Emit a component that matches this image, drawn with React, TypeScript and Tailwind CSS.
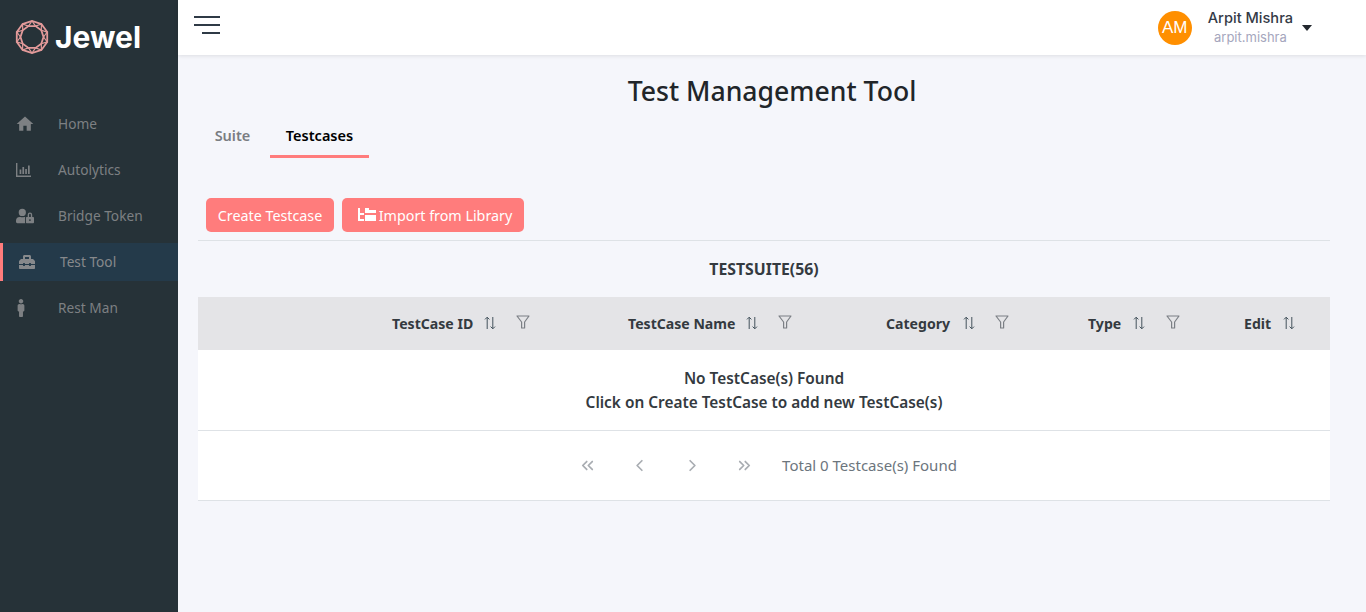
import { ChevronLeft, ChevronRight, ChevronsLeft, ChevronsRight } from 'lucide-react';
import { FaMale, FaToolbox, FaUserLock } from 'react-icons/fa';
import { MdHome } from 'react-icons/md';

function ChartIcon() {
  return (
    <svg viewBox="0 0 15 14" className="w-[15px] h-[14px]" fill="currentColor">
      <path d="M0 0h1.4v12.6H15V14H0z" />
      <rect x="3.6" y="6.5" width="1.7" height="4.5" />
      <rect x="6.4" y="4" width="1.7" height="7" />
      <rect x="9.2" y="6" width="1.7" height="5" />
      <rect x="12" y="2.5" width="1.7" height="8.5" />
    </svg>
  );
}

const NAV_ITEMS = [
  { label: 'Home', icon: <MdHome className="w-[20px] h-[20px] -ml-[1px]" /> },
  { label: 'Autolytics', icon: <ChartIcon /> },
  { label: 'Bridge Token', icon: <FaUserLock className="w-[18px] h-[18px]" /> },
  { label: 'Test Tool', icon: <FaToolbox className="w-4 h-4" />, active: true },
  { label: 'Rest Man', icon: <FaMale className="w-[18px] h-[18px] -ml-[4px]" /> },
];

const COLUMNS = [
  { label: 'TestCase ID', filter: true, sortGap: 'ml-[11px] -mt-[1px]', filterGap: 'ml-[20px] -mt-[3px]' },
  { label: 'TestCase Name', filter: true, sortGap: 'ml-[11px] -mt-[1px]', filterGap: 'ml-[20px] -mt-[3px]' },
  { label: 'Category', filter: true, sortGap: 'ml-[13px] -mt-[1px]', filterGap: 'ml-[20px] -mt-[3px]' },
  { label: 'Type', filter: true, sortGap: 'ml-[12px] -mt-[1px]', filterGap: 'ml-[21px] -mt-[3px]' },
  { label: 'Edit', filter: false, sortGap: 'ml-[12px] -mt-[1px]', filterGap: '' },
];

function JewelLogo() {
  const outer: string[] = [];
  const inner: string[] = [];
  for (let i = 0; i < 10; i++) {
    const a = (Math.PI * 2 * i) / 10 + Math.PI / 10;
    outer.push(`${17 + 16 * Math.cos(a)},${17 + 16 * Math.sin(a)}`);
    const b = a + Math.PI / 10;
    inner.push(`${17 + 11.5 * Math.cos(b)},${17 + 11.5 * Math.sin(b)}`);
  }
  return (
    <svg viewBox="0 0 34 34" className="w-[34px] h-[34px]" fill="none" stroke="#e39a9a">
      <polygon points={outer.join(' ')} strokeWidth={1.8} />
      <polygon points={inner.join(' ')} strokeWidth={1.8} />
      {/* lattice between the two rings */}
      {outer.map((p, i) => (
        <polyline key={i} points={`${inner[i]} ${p} ${inner[(i + 9) % 10]}`} strokeWidth={1.2} />
      ))}
    </svg>
  );
}

function SortIcon() {
  return (
    <svg viewBox="0 0 12 14" className="w-3 h-3.5" fill="none" stroke="#43525c" strokeWidth={1}>
      <path d="M3.2 13V1.4M1 3.4l2.2-2.2 2.2 2.2" />
      <path d="M8.8 1v11.6M6.6 10.6l2.2 2.2 2.2-2.2" />
    </svg>
  );
}

function FilterIcon() {
  return (
    <svg viewBox="0 0 14 14" className="w-3.5 h-3.5" fill="none" stroke="#7b7f85" strokeWidth={1.2}>
      <path d="M1 1h12L8.6 7v6H5.6V7z" strokeLinejoin="round" />
    </svg>
  );
}

export default function App() {
  return (
    <div className="flex h-[612px] overflow-hidden bg-[#f5f6fb] font-['Noto_Sans','Open_Sans',sans-serif]">
      {/* Sidebar */}
      <aside className="w-[178px] shrink-0 bg-[#263238]">
        <div className="flex items-center gap-[6px] pl-[15px] h-[74px]">
          <JewelLogo />
          <span className="font-['Inter',sans-serif] font-bold text-[30px] text-white leading-none">Jewel</span>
        </div>
        <nav className="mt-[31px] flex flex-col">
          {NAV_ITEMS.map((item) => (
            <div
              key={item.label}
              className={
                item.active
                  ? 'flex items-center h-[38px] mb-[8px] bg-[#243a4a] border-l-[3px] border-[#ff7c7c] text-[#87898c]'
                  : 'flex items-center h-[38px] mb-[8px] text-[#7d8083]'
              }
            >
              <span className={item.active ? 'w-[57px] pl-[16px] flex items-center' : 'w-[58px] pl-[16px] flex items-center'}>
                {item.icon}
              </span>
              <span className="text-[13.7px]">{item.label}</span>
            </div>
          ))}
        </nav>
      </aside>

      <div className="flex-1 min-w-0 flex flex-col">
        {/* Header */}
        <header className="h-[55px] shrink-0 bg-white shadow-[0_1px_4px_rgba(0,0,0,0.1)] flex items-center pl-[16px] pr-[54px]">
          <div className="flex flex-col items-end gap-[6px] w-[26px] -mt-[5px]">
            <span className="h-[2px] w-[26px] bg-[#2f3a46]" />
            <span className="h-[2px] w-[26px] bg-[#2f3a46]" />
            <span className="h-[2px] w-[18px] bg-[#2f3a46]" />
          </div>
          <div className="ml-auto flex items-center">
            <div className="w-[34px] h-[34px] rounded-full bg-[#ff8f00] flex items-center justify-center text-white text-[17px] font-['Liberation_Sans',sans-serif]">
              AM
            </div>
            <div className="ml-[16px] flex flex-col items-center font-['Inter',sans-serif]">
              <span className="text-[14.6px] font-medium leading-[19px] text-[#343a46]">Arpit Mishra</span>
              <span className="text-[13px] leading-[19px] text-[#a5a6bd]">arpit.mishra</span>
            </div>
            <span className="ml-[9px] w-0 h-0 border-x-[5.5px] border-x-transparent border-t-[6px] border-t-[#23282e]" />
          </div>
        </header>

        <main className="flex-1 px-[20px] pr-[36px]">
          <h1 className="text-center ml-[-20px] mr-[-36px] mt-[17px] text-[26.6px] font-medium leading-[38px] text-[#212529]">
            Test Management Tool
          </h1>

          {/* Tabs */}
          <div className="flex mt-[9px] h-[43px] text-[14.5px] font-semibold">
            <div className="w-[69px] text-center leading-[32px] text-[#7a7d82]">Suite</div>
            <div className="ml-[3px] w-[99px] text-center leading-[32px] text-black border-b-[3px] border-[#ff7c7c] h-[39px]">
              Testcases
            </div>
          </div>

          {/* Actions */}
          <div className="flex gap-[8px] mt-[36px] ml-[8px]">
            <button className="h-[34px] w-[128px] pt-[1px] rounded-[5px] bg-[#ff7c7c] text-white text-[14.3px]">Create Testcase</button>
            <button className="h-[34px] w-[182px] pl-[4px] pt-[1px] rounded-[5px] bg-[#ff7c7c] text-white text-[14.3px] flex items-center justify-center gap-[3px]">
              <svg viewBox="0 0 18 14" className="w-[18px] h-[14px] -mt-[2px]" fill="white">
                <path d="M0 0h2v5h4v2H2v4h4v2H0z" />
                <rect x="7" y="0" width="4" height="5" />
                <rect x="11" y="2" width="7" height="3" />
                <rect x="7" y="7" width="11" height="6" />
              </svg>
              Import from Library
            </button>
          </div>

          {/* Table */}
          <section className="mt-[8px] border-t border-[#dee2e6]">
            <div className="h-[56px] pt-[2px] flex items-center justify-center text-[15.8px] font-bold text-[#343a40]">TESTSUITE(56)</div>
            <div className="h-[53px] pt-[1px] bg-[#e4e4e7] grid grid-cols-[194px_236px_258px_202px_156px_1fr] items-center">
              <div />
              {COLUMNS.map((col) => (
                <div key={col.label} className="flex items-center text-[14.1px] font-bold text-[#343a40]">
                  <span>{col.label}</span>
                  <span className={col.sortGap}><SortIcon /></span>
                  {col.filter && (
                    <span className={col.filterGap}><FilterIcon /></span>
                  )}
                </div>
              ))}
            </div>
            <div className="h-[81px] pt-[2px] bg-white border-b border-[#dee2e6] flex flex-col items-center justify-center text-[15.4px] font-semibold leading-[24px] text-[#343a40]">
              <span>No TestCase(s) Found</span>
              <span>Click on Create TestCase to add new TestCase(s)</span>
            </div>
            <div className="h-[70px] bg-white border-b border-[#dee2e6] flex items-center justify-center pr-[10px] text-[#a9adb2]">
              <span className="w-[52.5px] flex justify-center"><ChevronsLeft className="w-[19px] h-[19px]" strokeWidth={2.2} /></span>
              <span className="w-[52.5px] flex justify-center"><ChevronLeft className="w-[19px] h-[19px]" strokeWidth={2.2} /></span>
              <span className="w-[52.5px] flex justify-center"><ChevronRight className="w-[19px] h-[19px]" strokeWidth={2.2} /></span>
              <span className="w-[52.5px] flex justify-center"><ChevronsRight className="w-[19px] h-[19px]" strokeWidth={2.2} /></span>
              <span className="ml-[11px] text-[15px] text-[#6c757d]">Total 0 Testcase(s) Found</span>
            </div>
          </section>
        </main>
      </div>
    </div>
  );
}
